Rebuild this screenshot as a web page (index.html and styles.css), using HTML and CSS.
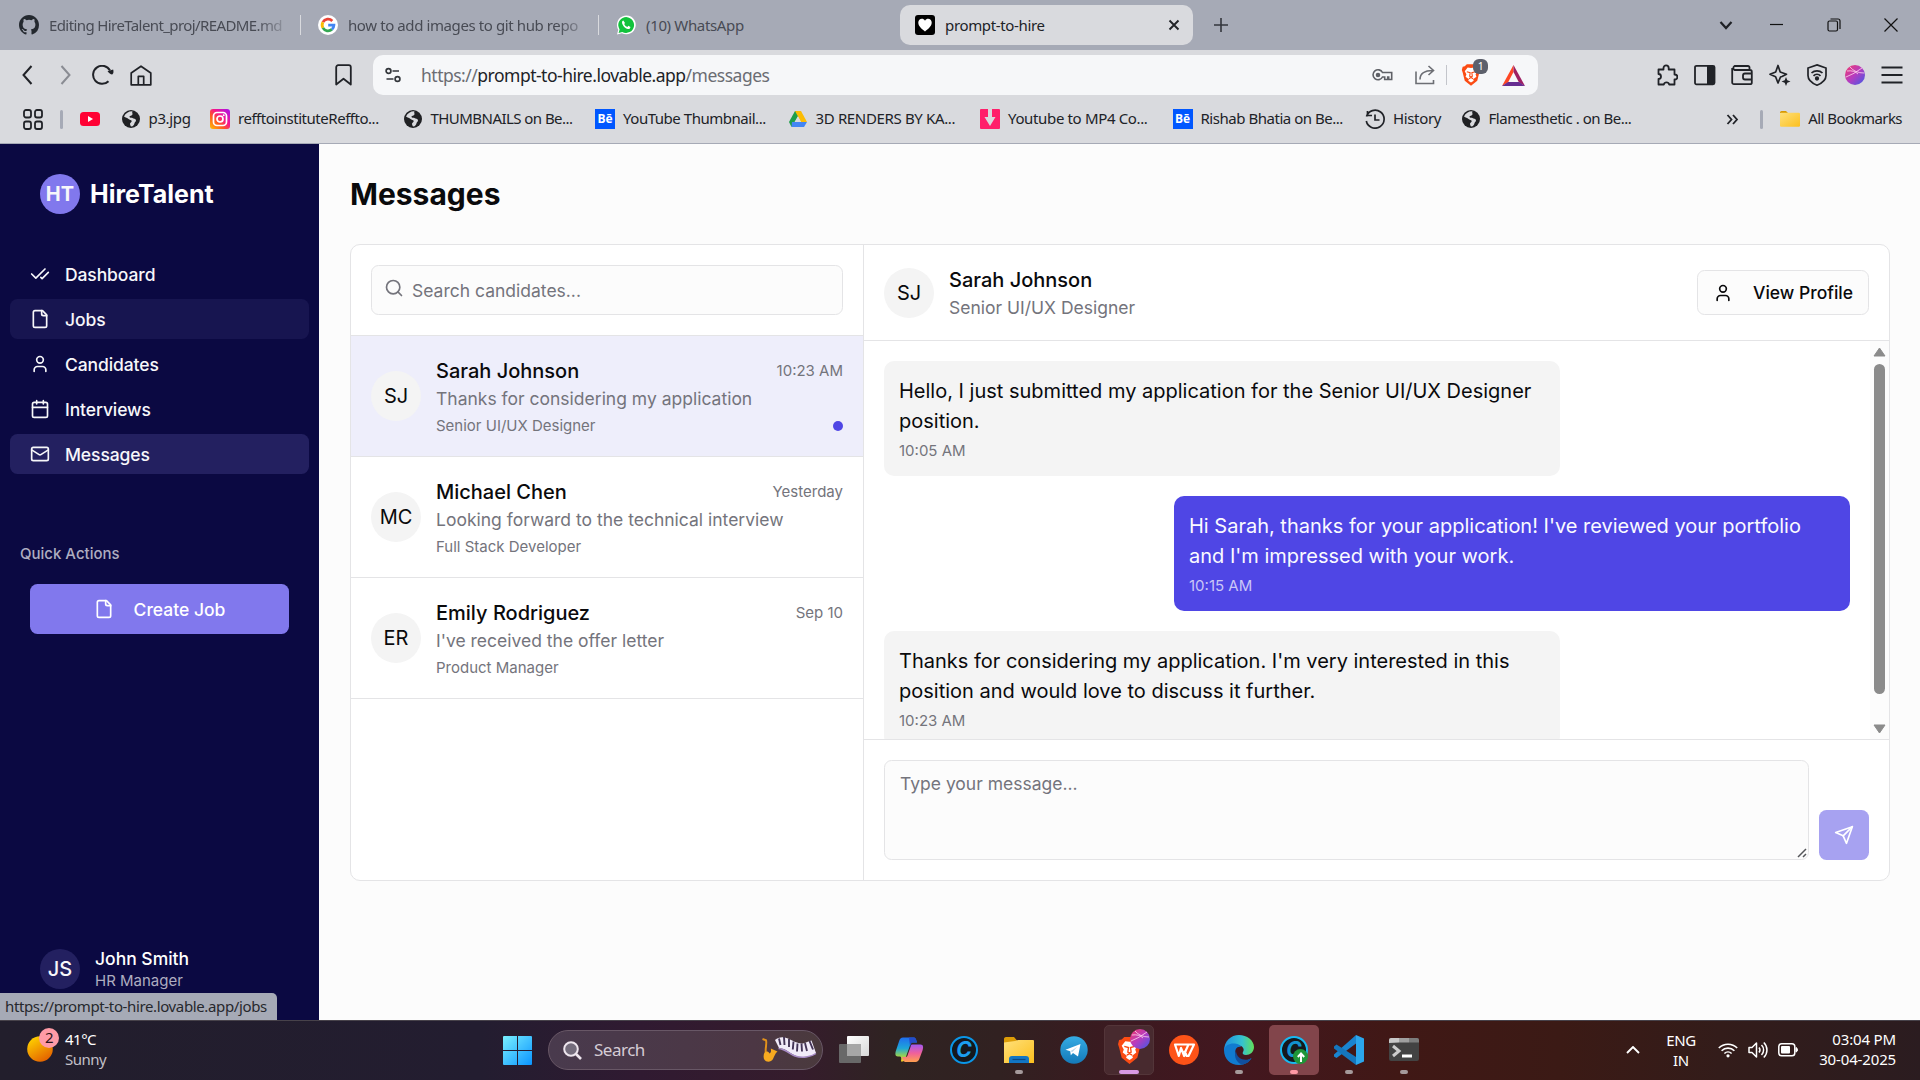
FILE: index.html
```html
<!DOCTYPE html>
<html lang="en">
<head>
<meta charset="utf-8">
<title>prompt-to-hire</title>
<link rel="stylesheet" href="styles.css">
</head>
<body>
<svg class="defs" width="0" height="0" aria-hidden="true">
  <defs>
    <linearGradient id="insta" x1="0" y1="1" x2="1" y2="0"><stop offset="0" stop-color="#ffc107"/><stop offset=".35" stop-color="#ff5a1f"/><stop offset=".6" stop-color="#f5138e"/><stop offset="1" stop-color="#a112f0"/></linearGradient>
    <linearGradient id="orb" x1="0" y1="0" x2="1" y2="1"><stop offset="0" stop-color="#f43a6b"/><stop offset=".5" stop-color="#b53cc0"/><stop offset="1" stop-color="#3d5be8"/></linearGradient>
    <linearGradient id="win" x1="0" y1="0" x2="1" y2="1"><stop offset="0" stop-color="#7af0ff"/><stop offset="1" stop-color="#0a94ff"/></linearGradient>
    <linearGradient id="sun" x1=".2" y1="0" x2=".8" y2="1"><stop offset="0" stop-color="#ffd400"/><stop offset="1" stop-color="#e25a00"/></linearGradient>
    <linearGradient id="fold" x1="0" y1="0" x2="1" y2="1"><stop offset="0" stop-color="#ffe07a"/><stop offset="1" stop-color="#fcbf1e"/></linearGradient>
    <linearGradient id="copA" x1="0" y1="0" x2="0" y2="1"><stop offset="0" stop-color="#1f6df0"/><stop offset=".45" stop-color="#1ea6d8"/><stop offset=".75" stop-color="#8fd05a"/><stop offset="1" stop-color="#ffd21e"/></linearGradient>
    <linearGradient id="copB" x1="0" y1="0" x2="0" y2="1"><stop offset="0" stop-color="#a258f2"/><stop offset=".5" stop-color="#f0609a"/><stop offset="1" stop-color="#ffa04e"/></linearGradient>
    <linearGradient id="edgeA" x1="0" y1="0" x2="1" y2="0"><stop offset="0" stop-color="#1e8fe0"/><stop offset=".6" stop-color="#35c1d0"/><stop offset="1" stop-color="#62e05a"/></linearGradient>
    <linearGradient id="tg" x1="0" y1="0" x2="0" y2="1"><stop offset="0" stop-color="#35ace4"/><stop offset="1" stop-color="#1479b8"/></linearGradient>
    <linearGradient id="tv" x1="0" y1="0" x2="1" y2="1"><stop offset="0" stop-color="#fff"/><stop offset="1" stop-color="#d8d8d8"/></linearGradient>
    <symbol id="i-file" viewBox="0 0 24 24"><path d="M15 2H6a2 2 0 0 0-2 2v16a2 2 0 0 0 2 2h12a2 2 0 0 0 2-2V7Z"/><path d="M14 2v4a2 2 0 0 0 2 2h4"/></symbol>
    <symbol id="i-user" viewBox="0 0 24 24"><path d="M19 21v-2a4 4 0 0 0-4-4H9a4 4 0 0 0-4 4v2"/><circle cx="12" cy="7" r="4"/></symbol>
    <symbol id="i-globe" viewBox="0 0 20 20"><circle cx="10" cy="10" r="9" fill="#202124"/><path d="M11.500 2.200C8 2 4.500 4 3 7.500c1.500 1 3.500 1.200 4.500 2.500.8 1.200 3 .5 3.200 2 .2 1.300-1.700 1.500-1.700 3 0 1 .5 1.800 1 2.600 2.500-.3 3.200-2 3.500-3.400.5-1.500 1.500-1.500 1.500-3-.2-1.700-2.500-1.200-3.500-2.200-.8-.8-2.500.2-3-1-.3-1.500 2.700-1.200 3-2.800.2-1-.8-1.800 0-3Z" fill="#d9dade"/></symbol>
    <symbol id="i-brave" viewBox="0 0 24 28"><path d="M7 1h10l2.500 2.500L22 4l1 4-1 3-2.500 10L12 27 4.500 21 2 11 1 8l1-4 2.500-.5Z" fill="#fb4c14"/><path d="M12 5.500 8 5 4.500 9.500 6.500 13l-1 3 4 3-.8 2L12 23l3.300-2-.8-2 4-3-1-3 2-3.500L16 5Z" fill="#fff"/><path d="m7 10 4 1.200-.6 4.300 1.600 1 1.600-1-.6-4.300L17 10M9.500 18.500 12 17l2.500 1.500" fill="none" stroke="#fb4c14" stroke-width="1.300"/></symbol>
    <symbol id="i-orb" viewBox="0 0 20 20"><circle cx="10" cy="10" r="10" fill="url(#orb)"/><path d="M1 12Q9 9 17 3M5 2Q10 8 19 8M2 6Q9 5 13 9" fill="none" stroke="#ffd5ee" stroke-width="1" opacity=".8"/></symbol>
  </defs>
</svg>

<header class="browser">
  <div class="tabs">
    <div class="tab tab-a">
      <svg class="ic20" viewBox="0 0 16 16"><path fill="#24292f" d="M8 0C3.580 0 0 3.580 0 8c0 3.540 2.290 6.530 5.470 7.590.4.070.55-.17.55-.38 0-.19-.01-.82-.01-1.490-2.010.37-2.530-.49-2.690-.94-.09-.23-.48-.94-.82-1.130-.28-.15-.68-.52-.01-.53.63-.01 1.080.58 1.230.82.72 1.210 1.870.87 2.330.66.07-.52.28-.87.51-1.070-1.780-.2-3.640-.89-3.640-3.950 0-.87.31-1.590.82-2.150-.08-.2-.36-1.020.08-2.120 0 0 .67-.21 2.200.82a7.500 7.500 0 0 1 4 0c1.530-1.040 2.200-.82 2.200-.82.44 1.100.16 1.920.08 2.120.51.56.82 1.270.82 2.150 0 3.070-1.870 3.750-3.650 3.950.29.25.54.73.54 1.480 0 1.070-.01 1.930-.01 2.200 0 .21.15.46.55.38A8 8 0 0 0 16 8c0-4.420-3.580-8-8-8Z"/></svg>
      <span class="fade t-gh">Editing HireTalent_proj/README.md</span>
    </div>
    <i class="tabsep"></i>
    <div class="tab tab-b">
      <svg class="ic20" viewBox="0 0 20 20"><circle cx="10" cy="10" r="10" fill="#fff"/><g fill="none" stroke-width="2.800"><path d="M14.300 5.900A5.900 5.900 0 0 0 4.900 7.200" stroke="#ea4335"/><path d="M4.900 7.200a5.900 5.900 0 0 0 0 5.700" stroke="#fbbc05"/><path d="M4.900 12.900a5.900 5.900 0 0 0 9 1.500" stroke="#34a853"/><path d="M13.900 14.400a5.900 5.900 0 0 0 2-4.200H10.200" stroke="#4285f4"/></g></svg>
      <span class="fade t-goo">how to add images to git hub repo</span>
    </div>
    <i class="tabsep"></i>
    <div class="tab tab-c">
      <svg class="ic20" viewBox="0 0 20 20"><path d="M1 19.500 2.300 14.800A9.400 9.400 0 1 1 5.900 18.200Z" fill="#fff"/><path d="m2.600 17.900 1-3.500A7.900 7.900 0 1 1 6.300 16.900Z" fill="#12c23c"/><path d="M7.300 5.500c-1.500.5-1.600 2.200-.7 3.900 1.200 2.400 3 3.900 5.200 4.500 1.500.3 2.600-.6 2.600-2l-2-1.100-1 1.100c-1.300-.4-2.600-1.600-3.200-3l.8-1Z" fill="#fff"/></svg>
      <span>(10) WhatsApp</span>
    </div>
    <div class="tab-active">
      <svg class="ic20" viewBox="0 0 20 20"><rect width="20" height="20" rx="3" fill="#000"/><path d="M10 16.500C6 13.500 3.300 11 3.300 7.600c0-4.200 5-5 6.700-1.800 1.700-3.200 6.700-2.400 6.700 1.800 0 3.400-2.700 5.900-6.700 8.900Z" fill="#fff"/></svg>
      <span>prompt-to-hire</span>
      <svg class="close" viewBox="0 0 12 12"><path d="m1.500 1.500 9 9m0-9-9 9" stroke="#222428" stroke-width="1.900"/></svg>
    </div>
    <svg class="plus" viewBox="0 0 14 14"><path d="M7 0v14M0 7h14" stroke="#33363c" stroke-width="1.600"/></svg>
    <div class="winctl">
      <svg width="14" height="10" viewBox="0 0 14 10"><path d="m1.500 2 5.500 6 5.500-6" fill="none" stroke="#1f2126" stroke-width="2.200"/></svg>
      <svg width="14" height="14" viewBox="0 0 14 14"><path d="M0 6.500h13" stroke="#111" stroke-width="1.200"/></svg>
      <svg width="14" height="14" viewBox="0 0 14 14" fill="none" stroke="#111" stroke-width="1.200"><rect x="1" y="3" width="9.500" height="10" rx="1.500"/><path d="M3.500 1H11a2 2 0 0 1 2 2v8"/></svg>
      <svg width="14" height="14" viewBox="0 0 14 14"><path d="m.5.500 13 13m0-13-13 13" stroke="#111" stroke-width="1.200"/></svg>
    </div>
  </div>

  <div class="toolbar">
    <svg class="nav-back" width="12" height="20" viewBox="0 0 12 20"><path d="m10.500 1-8 9 8 9" fill="none" stroke="#202227" stroke-width="2"/></svg>
    <svg class="nav-fwd" width="12" height="20" viewBox="0 0 12 20"><path d="m1.500 1 8 9-8 9" fill="none" stroke="#8a8c93" stroke-width="2"/></svg>
    <svg class="nav-reload" width="22" height="20" viewBox="0 0 22 20"><path d="M16.500 16.200A9 9 0 1 1 18 5.500" fill="none" stroke="#202227" stroke-width="2"/><path d="M15.500 6.200c1.500 1.800 3 3 4.700 3.400 1.500-1.500 1.600-3.300.9-5.100Z" fill="#202227"/></svg>
    <svg class="nav-home" width="22" height="21" viewBox="0 0 22 21" fill="none" stroke="#202227" stroke-width="1.700" stroke-linejoin="round"><path d="M1.200 8 11 1.200 20.800 8v11.800H1.200Z"/><path d="M8.300 19.500v-8.200h5.400v8.200"/></svg>
    <svg class="nav-mark" width="17" height="22" viewBox="0 0 17 22" fill="none" stroke="#202227" stroke-width="1.800" stroke-linejoin="round"><path d="M1.200 3.200a2 2 0 0 1 2-2h10.600a2 2 0 0 1 2 2v17.300L8.500 14.800 1.200 20.500Z"/></svg>
    <div class="urlbar">
      <svg width="16" height="16" viewBox="0 0 16 16" fill="none" stroke="#33363b" stroke-width="1.700"><circle cx="3.500" cy="4" r="2.400"/><path d="M7.500 4H14M1.500 12h7"/><circle cx="12.500" cy="12" r="2.400"/></svg>
      <span class="url"><em>https://</em>prompt-to-hire.lovable.app<em>/messages</em></span>
      <svg class="u-key" width="21" height="14" viewBox="0 0 21 14" fill="none" stroke="#5f6167" stroke-width="1.600"><path d="M10.500 4.500A5 5 0 1 0 10.500 9h2.200v2.500h3V9h1v2.500h3V4.500Z"/><circle cx="6" cy="7" r="1.500" fill="#5f6167"/></svg>
      <svg class="u-share" width="20" height="20" viewBox="0 0 20 20" fill="none" stroke="#6c6e74" stroke-width="1.600"><path d="M1 6.500V18.500h17.500V15M5 14.500C5 9 9 5.500 18 5.500M13.500 1l5 4.500-5 4.500"/></svg>
      <i class="u-sep"></i>
      <span class="shield"><svg width="20" height="24"><use href="#i-brave"/></svg><b>1</b></span>
      <svg class="u-bat" width="23" height="21" viewBox="0 0 23 21"><path d="M11.500 0 0 21l6-3.500L11.500 7Z" fill="#ff4724"/><path d="M11.500 0 23 21l-6-3.500L11.500 7Z" fill="#9e1f63"/><path d="M0 21h23l-6-4H6Z" fill="#662d91"/></svg>
    </div>
    <div class="ext">
      <svg viewBox="0 0 22 22" fill="none" stroke="#202227" stroke-width="1.800" stroke-linejoin="round"><path d="M2.500 5.500h5V4a2.600 2.600 0 0 1 5.200 0v1.500h5.800v5h.4a2.500 2.500 0 0 1 0 5h-.4v5h-5.300a2.800 2.800 0 0 0-5.400 0H2.500V15a2.300 2.300 0 0 0 0-5Z"/></svg>
      <svg viewBox="0 0 22 22"><rect x="1" y="1.800" width="19.500" height="18.500" rx="1.500" fill="none" stroke="#202227" stroke-width="1.800"/><path d="M13 2h7v18h-7Z" fill="#202227"/></svg>
      <svg viewBox="0 0 22 22" fill="none" stroke="#202227" stroke-width="1.800" stroke-linejoin="round"><path d="M18.500 6V3.500A1.500 1.500 0 0 0 17 2H3.500a2.300 2.300 0 0 0 0 4H19a1.800 1.800 0 0 1 1.800 1.800v10.600a1.800 1.800 0 0 1-1.800 1.800H3a1.800 1.800 0 0 1-1.800-1.800V4"/><path d="M20.500 9.500H14a2 2 0 0 0-2 2v2a2 2 0 0 0 2 2h6.500"/></svg>
      <svg viewBox="0 0 22 22" fill="none" stroke="#202227" stroke-width="1.700" stroke-linejoin="round"><path d="M9 1.500 11.200 8 17.500 10.200 13 12.500 11.500 13 9 19 6.600 12.800 1 10.200 6.700 8Z"/><path d="m17 13 1.300 3.200L21.500 17.500l-3.200 1.200L17 22l-1.300-3.300-3.200-1.200 3.200-1.300Z" fill="#202227" stroke="none"/></svg>
      <svg viewBox="0 0 22 22" fill="none" stroke="#202227" stroke-width="1.700"><path d="M11 .9 20 4v7.500c0 4-3.500 7.500-9 9.700-5.500-2.200-9-5.700-9-9.700V4Z"/><path d="M5.500 9a8 8 0 0 1 11 0M7.500 11.800a5 5 0 0 1 7 0"/><circle cx="11" cy="14.500" r="1.300" fill="#202227"/></svg>
      <svg viewBox="-1 -1 22 22"><use href="#i-orb" width="20" height="20"/></svg>
      <svg viewBox="0 0 22 22"><path d="M.5 3.500h21M.5 11h21M.5 18.500h21" stroke="#202227" stroke-width="1.900"/></svg>
    </div>
  </div>

  <div class="bookmarks">
    <svg class="apps" width="20" height="21" viewBox="0 0 20 21" fill="none" stroke="#202227" stroke-width="1.800"><rect x="1" y="1" width="7" height="7.500" rx="2"/><rect x="12" y="1" width="7" height="7.500" rx="2"/><rect x="1" y="12.500" width="7" height="7.500" rx="2"/><rect x="12" y="12.500" width="7" height="7.500" rx="2"/></svg>
    <i class="bsep"></i>
    <div class="bm"><svg class="ic20" viewBox="0 0 20 20"><rect y="3" width="20" height="14" rx="3.500" fill="#ff0033"/><path d="m8 7 5 3-5 3Z" fill="#fff"/></svg></div>
    <div class="bm bm-p3"><svg class="ic20"><use href="#i-globe"/></svg><span>p3.jpg</span></div>
    <div class="bm bm-full"><svg class="ic20" viewBox="0 0 20 20"><rect width="20" height="20" rx="3" fill="url(#insta)"/><g fill="none" stroke="#fff" stroke-width="1.700"><rect x="3.500" y="3.500" width="13" height="13" rx="3.500"/><circle cx="10" cy="10" r="3"/></g><circle cx="13.700" cy="6.300" r="1" fill="#fff"/></svg><span class="tight">refftoinstituteReffto...</span></div>
    <div class="bm bm-full"><svg class="ic20"><use href="#i-globe"/></svg><span class="tighter">THUMBNAILS on Be...</span></div>
    <div class="bm bm-full"><b class="be">Bē</b><span class="tight">YouTube Thumbnail...</span></div>
    <div class="bm bm-full"><svg class="ic20" viewBox="0 0 20 20"><path d="M7 2h6l-9.500 16L1 13Z" fill="#1e9e4a"/><path d="M7 2h6l6 11h-6Z" fill="#fbbc04"/><path d="M4 13h15l-3 5H3.500Z" fill="#4285f4"/><path d="m10 7.500 3 5.500H7Z" fill="#d9dade"/></svg><span>3D RENDERS BY KA...</span></div>
    <div class="bm bm-full"><svg class="ic20" viewBox="0 0 20 20"><rect width="20" height="20" rx="1" fill="#ff1f6b"/><path d="M8 0h4v8h3.500L10 17 4.500 8H8Z" fill="#d9dade"/></svg><span>Youtube to MP4 Co...</span></div>
    <div class="bm bm-full"><b class="be">Bē</b><span class="tight">Rishab Bhatia on Be...</span></div>
    <div class="bm bm-hist"><svg class="ic20" viewBox="0 0 20 20" fill="none" stroke="#202227" stroke-width="1.700"><path d="M1.500 7.500A9 9 0 1 1 1.300 12M2.500 2v4.500H7M10 5.500V11h4.500"/></svg><span>History</span></div>
    <div class="bm"><svg class="ic20"><use href="#i-globe"/></svg><span class="tight">Flamesthetic . on Be...</span></div>
    <svg class="more" width="13" height="11" viewBox="0 0 13 11"><path d="m1.500 1 4 4.500-4 4.500M7 1l4 4.500L7 10" fill="none" stroke="#202227" stroke-width="1.800"/></svg>
    <i class="bsep"></i>
    <div class="bm bm-all"><svg class="ic20" viewBox="0 0 20 20"><path d="M0 3.500A1.500 1.500 0 0 1 1.500 2H6l2 2H0Z" fill="#d99a00"/><rect y="3.800" width="20" height="14" rx="1.200" fill="url(#fold)"/></svg><span class="tighter">All Bookmarks</span></div>
  </div>
</header>

<div class="app">
  <aside class="sidebar">
    <div class="brand"><span class="logo">HT</span><span class="brand-name">HireTalent</span></div>
    <nav class="menu">
      <a><svg class="ico" viewBox="0 0 24 24"><path d="M18 6 7 17l-5-5"/><path d="m22 10-7.500 7.500L13 16"/></svg>Dashboard</a>
      <a class="hover"><svg class="ico"><use href="#i-file"/></svg>Jobs</a>
      <a><svg class="ico"><use href="#i-user"/></svg>Candidates</a>
      <a><svg class="ico" viewBox="0 0 24 24"><path d="M8 2v4M16 2v4M3 10h18"/><rect x="3" y="4" width="18" height="18" rx="2"/></svg>Interviews</a>
      <a class="active"><svg class="ico" viewBox="0 0 24 24"><rect x="2" y="4" width="20" height="16" rx="2"/><path d="m22 7-8.970 5.700a1.940 1.940 0 0 1-2.060 0L2 7"/></svg>Messages</a>
    </nav>
    <p class="quick">Quick Actions</p>
    <button class="create"><svg class="ico"><use href="#i-file"/></svg>Create Job</button>
    <div class="me"><span class="me-av">JS</span><div><p class="me-name">John Smith</p><p class="me-role">HR Manager</p></div></div>
    <div class="status">https://prompt-to-hire.lovable.app/jobs</div>
  </aside>

  <main class="main">
    <h1>Messages</h1>
    <section class="card">
      <div class="list">
        <div class="search"><div class="search-box"><svg class="ico" viewBox="0 0 24 24"><circle cx="11" cy="11" r="8"/><path d="m21 21-4.300-4.300"/></svg><span>Search candidates...</span></div></div>
        <div class="row selected"><span class="av">SJ</span><div class="row-body"><div class="line"><b>Sarah Johnson</b><time>10:23 AM</time></div><p class="prev">Thanks for considering my application</p><div class="line role"><span>Senior UI/UX Designer</span><i class="dot"></i></div></div></div>
        <div class="row"><span class="av">MC</span><div class="row-body"><div class="line"><b>Michael Chen</b><time>Yesterday</time></div><p class="prev">Looking forward to the technical interview</p><div class="line role"><span>Full Stack Developer</span></div></div></div>
        <div class="row"><span class="av">ER</span><div class="row-body"><div class="line"><b>Emily Rodriguez</b><time>Sep 10</time></div><p class="prev">I've received the offer letter</p><div class="line role"><span>Product Manager</span></div></div></div>
      </div>
      <div class="chat">
        <div class="chat-head">
          <span class="av">SJ</span>
          <div class="who"><b>Sarah Johnson</b><p class="prev">Senior UI/UX Designer</p></div>
          <button class="profile"><svg class="ico"><use href="#i-user"/></svg>View Profile</button>
        </div>
        <div class="thread">
          <div class="msgs">
            <div class="msg"><p>Hello, I just submitted my application for the Senior UI/UX Designer position.</p><time>10:05 AM</time></div>
            <div class="msg mine"><p>Hi Sarah, thanks for your application! I've reviewed your portfolio and I'm impressed with your work.</p><time>10:15 AM</time></div>
            <div class="msg"><p>Thanks for considering my application. I'm very interested in this position and would love to discuss it further.</p><time>10:23 AM</time></div>
          </div>
          <div class="scroll">
            <svg width="13" height="10" viewBox="0 0 13 10"><path d="M6.500 1 12 9H1Z" fill="#8b8b8b" stroke="#8b8b8b" stroke-linejoin="round"/></svg>
            <i class="thumb"></i>
            <svg class="down" width="13" height="10" viewBox="0 0 13 10"><path d="M6.500 9 12 1H1Z" fill="#8b8b8b" stroke="#8b8b8b" stroke-linejoin="round"/></svg>
          </div>
        </div>
        <div class="composer">
          <div class="input"><span>Type your message...</span><svg width="10" height="10" viewBox="0 0 10 10"><path d="M1 9l8-8M6 9l3-3" stroke="#55565a" stroke-width="1.500"/></svg></div>
          <button class="send"><svg class="ico" viewBox="0 0 24 24"><path d="m22 2-7 20-4-9-9-4Z"/><path d="M22 2 11 13"/></svg></button>
        </div>
      </div>
    </section>
  </main>
</div>

<footer class="taskbar">
  <div class="weather">
    <svg class="sun" width="34" height="44" viewBox="0 0 34 44"><ellipse cx="13" cy="28" rx="12.800" ry="12.800" fill="url(#sun)"/><circle cx="22" cy="17" r="10" fill="#ff9ba6"/></svg><b class="wbadge">2</b>
    <div class="wtext"><p>41°C</p><p class="dim">Sunny</p></div>
  </div>
  <svg class="start" width="29" height="29" viewBox="0 0 29 29"><path d="M1 0h13v14H0V1a1 1 0 0 1 1-1Zm14 0h13a1 1 0 0 1 1 1v13H15ZM0 15h14v14H1a1 1 0 0 1-1-1Zm15 0h14v13a1 1 0 0 1-1 1H15Z" fill="url(#win)"/></svg>
  <div class="tsearch">
    <svg width="19" height="19" viewBox="0 0 19 19" fill="none" stroke="#eee6ee" stroke-width="2"><circle cx="8" cy="8" r="6.800" fill="#746c7c"/><path d="m13 13 5 5" stroke-width="2.600"/></svg>
    <span>Search</span>
    <svg class="music" width="56" height="28" viewBox="0 0 56 28">
      <path d="M1.500 3 5 4.200c1.500 4-2 10 .5 15.300" fill="none" stroke="#e2921b" stroke-width="2"/>
      <path d="M2.800 18.500C3.500 15 7 14.500 8.500 17.500c1.500-.5 1.800-2.500 1.300-5l6.700 3c-2.500 2-3 4.500-4.500 7.500-1.500 2.500-4.500 3.300-7 2.200-2.300-1.200-2.700-4-2.200-6.700Z" fill="#f6aa20"/>
      <path d="M14 4c4-3.500 9-3.500 14-1 6 3 12 6.500 18 3l4.500-1.500L55 17c-5 4-14 5.500-21 2.500-5-2-9-7-16-7.500Z" fill="#f1ebf8"/>
      <path d="m18 2.500 1.500 6.500m3.500-8 .5 8m4.500-6 0 8m4.500-5.500-.7 8m4.700-6-.5 8m4.500-8 .5 8m3-8.500 2 8m2.500-10 3.500 8.500" stroke="#433456" stroke-width="1.900"/>
      <path d="M17.500 12.500c7 .5 11 5.500 16.500 7.500 7 2.500 16 1 21-2.500" fill="none" stroke="#a78bc6" stroke-width="1.500"/>
    </svg>
  </div>
  <div class="tapps">
    <div class="tile"><svg width="30" height="30" viewBox="0 0 30 30"><rect y="9" width="22" height="19" rx="1" fill="#686868"/><rect x="8" y="1" width="22" height="20" rx="1" fill="url(#tv)"/><path d="M8 9h14v12H8Z" fill="#a6a6a6"/></svg></div>
    <div class="tile"><svg width="30" height="30" viewBox="0 0 30 30"><path d="M9 2.500h10c3 0 3 2 4 5h-6l-6 17c-1 2-2 2-4 2 0 0 1-5-1-5H4c-3 0-3-3-2-6l3-9c.7-2.500 2-4 4-4Z" fill="url(#copA)"/><path d="M15 2.500h4.500c2.500 0 2.500 2 3.500 5h-4c-2 0-2 2-3 4Z" fill="#234ccb"/><path d="M18 9.500h8.500c3 0 3 3 2 6l-3 8c-.7 2-2 3.500-4 3.500H12c-2 0-3-1-4-5h3.500c2 0 2-1.500 2.500-3l2.500-7c.3-1 .5-2.500 1.500-2.500Z" fill="url(#copB)"/></svg></div>
    <div class="tile"><span class="cc">C</span></div>
    <div class="tile run"><svg width="30" height="30" viewBox="0 0 30 30"><path d="M0 3.500A2 2 0 0 1 2 2h8l3 3.500V9H0Z" fill="#dc9c07"/><path d="m11 6 3-1h15a1 1 0 0 1 1 1v22H0V7.500Z" fill="url(#fold)"/><path d="M5 28v-4a3 3 0 0 1 3-3h14a3 3 0 0 1 3 3v4Z" fill="#1276c4"/><path d="M8.500 24.500h13" stroke="#0b4884" stroke-width="1.200"/></svg></div>
    <div class="tile"><svg width="28" height="28" viewBox="0 0 28 28"><circle cx="14" cy="14" r="13.700" fill="url(#tg)"/><path d="m5.500 13.800 15-5.800-2.500 12.500-5-3.500-2.200 2.200-.6-4Z" fill="#fff"/><path d="m10.400 15.200 7-4.500-5 5.300" fill="#b9d7ea"/></svg></div>
    <div class="tile open"><svg width="25" height="31"><use href="#i-brave"/></svg><svg class="tile-orb" width="20" height="20"><use href="#i-orb"/></svg></div>
    <div class="tile"><svg width="30" height="30" viewBox="0 0 30 30"><circle cx="15" cy="15" r="15" fill="#fd5318"/><path d="M6 9.500H19.500L17 15l-1.800 6L12 13 9.800 21ZM19.500 9.500H25L19.500 21h-1.800L15.500 15.500" fill="none" stroke="#fff" stroke-width="2.200" stroke-linejoin="round"/></svg></div>
    <div class="tile run"><svg width="30" height="30" viewBox="0 0 30 30"><path d="M0 16C0 6 7 0 15 0s15 5.500 15 12c0 5-4 8-8 8-3 0-4-1.500-3-3 2-3-.5-6.500-4.500-6.500C9 10.500 3 11 0 16Z" fill="url(#edgeA)"/><path d="M0 15c1-5 6-7 11-6.500 3.500.3 5.500 2 6 3.500-4-1-6.500 2.500-5.500 7 1 4 5.500 7 10 6.500 2-.2 4-1.200 6-2.500-2 4-7 7-12.500 7C6.500 30 0 24 0 15Z" fill="#117bd0"/><path d="M12 16c-3 5 1 13 7 13.500 4-1 7-3 8.500-6.500-6 4-15 1-15.500-7Z" fill="#114f9e"/></svg></div>
    <div class="tile alert"><span class="cc cc-dark">C</span><b class="up"><svg width="8" height="10" viewBox="0 0 8 10"><path d="M4 10V2M.8 5 4 1.500 7.200 5" fill="none" stroke="#fff" stroke-width="2"/></svg></b></div>
    <div class="tile run"><svg width="30" height="30" viewBox="0 0 30 30"><path d="M22 0v8.500L2.500 23 0 21.500v-2Z" fill="#1a84cf"/><path d="M0 11.500 2.500 9.500 22 22v8L0 13.500Z" fill="#1576bd"/><path d="m22 0 8 3.500v23L22 30Z" fill="#2ba6ec"/></svg></div>
    <div class="tile run"><svg width="30" height="24" viewBox="0 0 30 24"><rect width="30" height="23" rx="2" fill="#434343"/><path d="M0 5V2a2 2 0 0 1 2-2h8v4.500Z" fill="#c8c8c8"/><path d="M10 0h10v4.500H10Z" fill="#a0a0a0"/><path d="M20 0h8a2 2 0 0 1 2 2v2.500H20Z" fill="#7c7c7c"/><path d="m4 8 6 5-6 5" fill="none" stroke="#ccc" stroke-width="3"/><path d="M13 18h10" stroke="#fff" stroke-width="3"/></svg></div>
  </div>
  <div class="tray">
    <svg width="14" height="8" viewBox="0 0 14 8"><path d="m1 7 6-6 6 6" fill="none" stroke="#fff" stroke-width="1.900"/></svg>
    <div class="lang"><p>ENG</p><p>IN</p></div>
    <svg class="wifi" width="20" height="16" viewBox="0 0 20 16" fill="none" stroke="#fff" stroke-width="1.600"><path d="M.8 6a13 13 0 0 1 18.400 0M3.600 8.800a9 9 0 0 1 12.800 0M6.400 11.500a5.200 5.200 0 0 1 7.200 0"/><circle cx="10" cy="13.800" r="1.600" fill="#fff" stroke="none"/></svg>
    <svg class="vol" width="20" height="18" viewBox="0 0 20 18" fill="none" stroke="#fff" stroke-width="1.500"><path d="M1 6.500h3L8.500 2v14L4 11.500H1Z" stroke-linejoin="round"/><path d="M11 6.500a4 4 0 0 1 0 5M13.500 4a7 7 0 0 1 0 10M15.800 1.500a10.500 10.500 0 0 1 0 15"/></svg>
    <svg class="batt" width="20" height="14" viewBox="0 0 20 14"><rect x=".8" y=".8" width="16" height="12" rx="2.800" fill="none" stroke="#fff" stroke-width="1.500"/><rect x="3" y="3" width="9" height="7.600" rx="1" fill="#fff"/><path d="M18 4.500a2.500 2.500 0 0 1 0 4.600Z" fill="#fff" stroke="#fff"/></svg>
    <div class="clock"><p>03:04 PM</p><p>30-04-2025</p></div>
  </div>
</footer>
</body>
</html>
```
FILE: styles.css
```css
* { box-sizing: border-box; }
body { margin: 0; width: 1920px; height: 1080px; overflow: hidden; display: flex; flex-direction: column; font-family: "Inter", sans-serif; color: #0a0a0c; }
p, h1 { margin: 0; }
svg { display: block; flex: none; }
button { font: inherit; margin: 0; border: 0; }
i { display: block; flex: none; }
.defs { position: absolute; }
.ic20 { width: 20px; height: 20px; }

/* Browser chrome */
.browser { height: 144px; background: #d9dade; border-bottom: 1px solid #a6aab6; font: 15px "Noto Sans", sans-serif; letter-spacing: -0.35px; color: #202227; flex: none; }
.browser span { white-space: nowrap; }
.tabs { height: 50px; background: #a6aab6; display: flex; align-items: center; padding: 10px 22px 10px 19px; line-height: 20px; color: #484b54; }
.tabs span { margin-top: -1px; }
.tab { display: flex; align-items: center; gap: 10px; flex: none; }
.tab-a { width: 266px; }
.tab-b { width: 268px; margin-left: 17px; }
.tab-c { width: 230px; margin-left: 17px; }
.tab-a + .tabsep { margin-left: 15px; }
.tab-b + .tabsep { margin-left: 12px; }
.tabsep { width: 1px; height: 20px; background: #d9dade; }
.fade { flex: 1; -webkit-mask-image: linear-gradient(to right, #000 88%, transparent 103%); mask-image: linear-gradient(to right, #000 88%, transparent 103%); }
.t-gh { letter-spacing: -0.6px; }
.t-goo { letter-spacing: -0.4px; }
.tab-active { width: 293px; height: 40px; flex: none; margin-left: 54px; border-radius: 10px; background: #d9dade; display: flex; align-items: center; gap: 10px; padding: 0 13px 0 15px; color: #202227; }
.close { width: 12px; height: 12px; margin-left: auto; }
.plus { width: 14px; height: 14px; margin-left: 21px; }
.winctl { margin-left: auto; display: flex; align-items: center; gap: 43px; }
.winctl svg:first-child { margin-right: -6px; }

.toolbar { height: 50px; display: flex; align-items: center; padding: 0 17px 0 21px; }
.nav-fwd { margin-left: 27px; }
.nav-reload { margin-left: 20px; }
.nav-home { margin-left: 16px; }
.nav-mark { margin-left: 183px; }
.urlbar { width: 1165px; height: 40px; margin-left: 21px; border-radius: 10px; background: #f6f7f9; display: flex; align-items: center; padding: 0 13px 0 12px; }
.url { margin: -1px 0 0 20px; font-size: 17.500px; letter-spacing: -0.5px; }
.url em { font-style: normal; color: #6b6d73; }
.u-key { margin-left: auto; }
.u-share { margin-left: 22px; }
.u-sep { width: 1px; height: 20px; background: #c3c5cb; margin-left: 11px; }
.shield { position: relative; margin-left: 14px; }
.shield b { position: absolute; left: 12px; top: -4px; width: 15px; height: 15px; border-radius: 6px; background: #5d606c; color: #fff; font: 10.500px/15px "Noto Sans", sans-serif; text-align: center; }
.u-bat { margin-left: 21px; }
.ext { margin-left: auto; display: flex; gap: 15.500px; }
.ext svg { width: 22px; height: 22px; }

.bookmarks { height: 38px; display: flex; align-items: center; padding: 0 18px 0 23px; }
.bm { display: flex; align-items: center; gap: 8px; margin-right: 20.500px; line-height: 20px; flex: none; }
.bm span { margin-top: -2px; }
.bm .tight { letter-spacing: -0.47px; }
.bm .tighter { letter-spacing: -0.55px; }
.bm-full { width: 172px; }
.bm-p3 { width: 69px; }
.bm-hist { width: 75px; }
.bsep { width: 3px; height: 19px; border-radius: 2px; background: #a6aab6; margin: 0 17px 0 17px; }
.be { width: 20px; height: 20px; background: #0057ff; color: #fff; font: bold 12px/20px "Open Sans", sans-serif; text-align: center; letter-spacing: 0; }
.more { margin-left: auto; margin-right: 4px; }
.bm-all { margin-right: 0; }

/* Application */
.app { height: 876px; display: flex; background: #fcfcfc; flex: none; }
.sidebar { width: 319px; background: #0b0942; color: #f7f7fa; position: relative; display: flex; flex-direction: column; flex: none; }
.brand { display: flex; align-items: center; gap: 10px; padding: 30px 40px 0; }
.logo { width: 40px; height: 40px; border-radius: 50%; background: #8178ed; font-size: 20px; font-weight: 700; display: grid; place-items: center; }
.brand-name { font-size: 25px; font-weight: 700; line-height: 35px; color: #fff; }
.menu { display: flex; flex-direction: column; gap: 5px; padding: 40px 10px 0; }
.menu a { height: 40px; border-radius: 7.500px; padding: 0 20px; display: flex; align-items: center; gap: 15px; font-size: 17.500px; font-weight: 500; letter-spacing: -0.1px; }
.menu .hover { background: #171550; }
.menu .active { background: #232060; }
.ico { width: 20px; height: 20px; fill: none; stroke: currentColor; stroke-width: 2; stroke-linecap: round; stroke-linejoin: round; }
.quick { margin: 70px 0 0 20px; font-size: 15px; line-height: 20px; font-weight: 500; color: #aeadc0; }
.create { margin: 20px 30px 0; height: 50px; border-radius: 7.500px; background: #8178ed; color: #fff; display: flex; align-items: center; justify-content: center; gap: 20px; font-size: 17.500px; font-weight: 500; }
.me { margin-top: auto; padding: 0 40px 29px; display: flex; align-items: center; gap: 15px; }
.me-av { width: 40px; height: 40px; border-radius: 50%; background: #232060; font-size: 20px; font-weight: 500; display: grid; place-items: center; }
.me-name { font-size: 17.500px; font-weight: 500; line-height: 25px; color: #fff; }
.me-role { font-size: 15px; line-height: 20px; color: #aeadc0; }
.status { position: absolute; left: 0; bottom: 0; width: 277px; height: 27px; background: #a6aab6; border-top-right-radius: 5px; color: #26282d; font: 15px/26px "Noto Sans", sans-serif; letter-spacing: -0.37px; padding-left: 5px; white-space: nowrap; }

.main { flex: 1; padding: 30px 30px 0 31px; }
h1 { font-size: 30px; line-height: 40px; font-weight: 700; }
.card { margin-top: 30px; width: 1540px; height: 637px; border: 1px solid #e4e4e6; border-radius: 10px; background: #fff; display: flex; overflow: hidden; }
.list { width: 513px; border-right: 1px solid #e4e4e6; flex: none; }
.search { height: 91px; padding: 20px; border-bottom: 1px solid #e4e4e6; }
.search-box { height: 50px; border: 1px solid #e4e4e6; border-radius: 7.500px; background: #fcfcfc; display: flex; align-items: center; padding-left: 12px; gap: 8px; font-size: 17.500px; color: #74747c; }
.search-box svg { margin-bottom: 4px; }
.row { height: 121px; padding: 20px; border-bottom: 1px solid #e4e4e6; display: flex; align-items: center; gap: 15px; }
.selected { background: #eeeefb; }
.av { width: 50px; height: 50px; border-radius: 50%; background: #f4f4f4; font-size: 20px; display: grid; place-items: center; flex: none; }
.row-body { flex: 1; }
.line { display: flex; justify-content: space-between; align-items: center; font-size: 20px; line-height: 30px; }
.line b, .who b { font-weight: 500; }
time { font-size: 15px; line-height: 20px; color: #74747c; display: block; }
.prev { font-size: 17.500px; line-height: 25px; color: #74747c; white-space: nowrap; }
.role { margin-top: 5px; font-size: 15px; line-height: 20px; color: #74747c; }
.dot { width: 10px; height: 10px; border-radius: 50%; background: #4f46e5; }
.chat { flex: 1; display: flex; flex-direction: column; min-width: 0; }
.chat-head { height: 96px; padding: 0 20px; border-bottom: 1px solid #e4e4e6; display: flex; align-items: center; gap: 15px; flex: none; }
.who { font-size: 20px; line-height: 30px; }
.profile { margin-left: auto; height: 45px; border: 1px solid #e4e4e6; border-radius: 7.500px; background: #fcfcfc; padding: 0 15px; display: flex; align-items: center; gap: 20px; font-size: 17.500px; font-weight: 500; color: #0a0a0c; }
.thread { height: 398px; display: flex; overflow: hidden; flex: none; }
.msgs { flex: 1; padding: 20px; display: flex; flex-direction: column; gap: 20px; }
.msg { width: 676px; height: 115px; flex: none; padding: 15px; border-radius: 10px; background: #f4f4f4; font-size: 20px; line-height: 30px; }
.msg time { margin-top: 5px; }
.mine { align-self: flex-end; background: #4f46e5; color: #fafaff; }
.mine time { color: #cac7f7; }
.scroll { width: 19px; background: #fcfcfc; display: flex; flex-direction: column; align-items: center; padding: 6px 0 5px; }
.thumb { width: 11px; height: 330px; border-radius: 6px; background: #8b8b8b; margin-top: 7px; }
.down { margin-top: auto; }
.composer { flex: 1; border-top: 1px solid #e4e4e6; padding: 20px; display: flex; align-items: flex-end; gap: 10px; }
.input { width: 925px; height: 100px; border: 1px solid #e4e4e6; border-radius: 7.500px; background: #fcfcfc; padding: 10px 1px 1px 15px; font-size: 17.500px; line-height: 25px; color: #74747c; display: flex; justify-content: space-between; }
.input svg { align-self: flex-end; }
.send { width: 50px; height: 50px; border-radius: 7.500px; background: #a7a2f1; color: #fff; display: grid; place-items: center; }

/* Taskbar */
.taskbar { height: 60px; border-top: 1px solid #47424a; padding-bottom: 1px; background: linear-gradient(to right, #221e2c 0, #231d30 480px, #301a31 640px, #351c2c 800px, #2f2322 890px, #312121 1000px, #3c1920 1130px, #43171f 1240px, #401815 1400px, #3b1a15 1560px, #331c1a 1720px, #2b1c20 1920px); color: #fff; font: 15px "Noto Sans", sans-serif; letter-spacing: -0.35px; display: flex; align-items: center; flex: none; }
.weather { position: relative; width: 475px; height: 58px; margin-left: 27px; display: flex; align-items: center; flex: none; }
.sun { margin-top: -14px; }
.wbadge { position: absolute; left: 12px; top: 6px; width: 20px; font-weight: 400; line-height: 20px; text-align: center; color: #2b1418; }
.wtext { margin: -2px 0 0 4px; line-height: 20px; letter-spacing: -0.5px; }
.dim { color: #c3c0c8; }
.start { margin-left: 1px; }
.tsearch { width: 275px; height: 40px; margin-left: 16px; border: 1px solid #685766; border-radius: 20px; background: linear-gradient(to right, #493a4d, #4c3744 75%, #4a3a3d); display: flex; align-items: center; padding: 0 5px 0 14px; font-size: 17px; color: #d5ccd5; }
.tsearch span { margin: -1px 0 0 12px; letter-spacing: -0.5px; }
.music { margin-left: auto; }
.tapps { display: flex; gap: 5px; margin-left: 6px; }
.tile { position: relative; width: 50px; height: 50px; border-radius: 5px; display: grid; place-items: center; }
.tile::after { content: ""; position: absolute; left: 21px; bottom: 1px; width: 8px; height: 4px; border-radius: 2px; }
.run::after { background: #a59a9b; }
.open { background: #482a2f; border: 1px solid #533539; }
.open::after { left: 14px; bottom: 0; width: 20px; background: #d99ae4; }
.tile-orb { position: absolute; left: 25px; top: 3px; }
.alert { background: #82454b; }
.alert::after { background: #ff99a5; }
.cc { width: 28px; height: 28px; border: 2px solid #0a96e8; border-radius: 50%; background: #14181d; color: #1b9ff0; font: italic bold 21px/24px "Inter", sans-serif; text-align: center; letter-spacing: 0; }
.cc-dark { border-color: #17b9f2; color: #1292cf; }
.up { position: absolute; left: 24px; top: 24px; width: 15px; height: 15px; border-radius: 50%; background: #1f9638; display: grid; place-items: center; }
.tray { margin-left: auto; display: flex; align-items: center; padding-right: 24px; line-height: 20px; }
.lang { width: 40px; margin: -1px 0 0 21px; text-align: center; }
.wifi { margin-left: 17px; }
.vol { margin-left: 10px; }
.batt { margin-left: 10px; }
.clock { width: 98px; margin-top: -3px; text-align: right; letter-spacing: -0.15px; }
```
